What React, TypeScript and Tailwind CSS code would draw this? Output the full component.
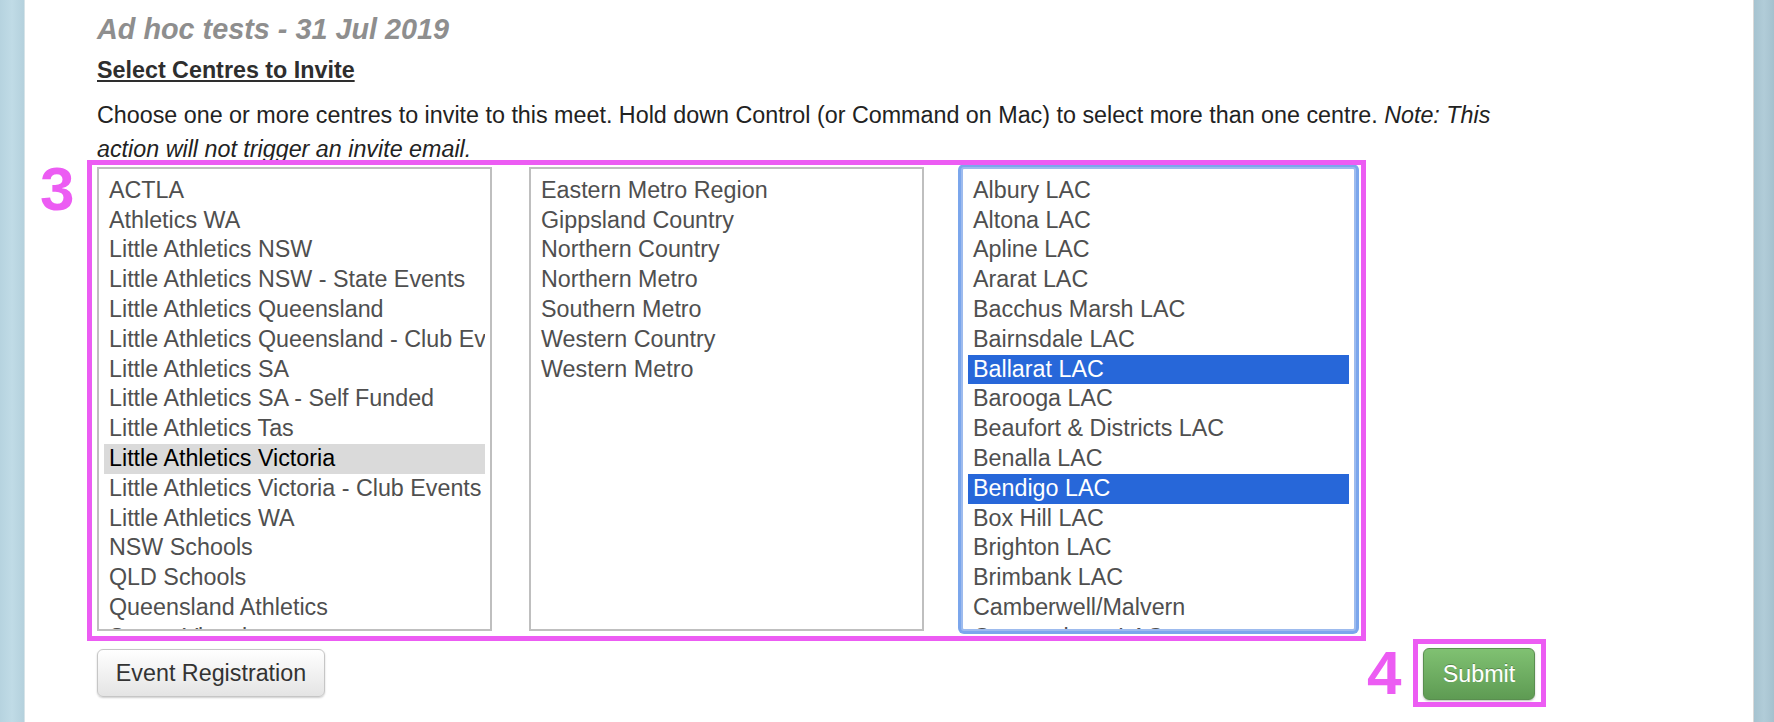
import React from "react";

const col1 = [
  "ACTLA",
  "Athletics WA",
  "Little Athletics NSW",
  "Little Athletics NSW - State Events",
  "Little Athletics Queensland",
  "Little Athletics Queensland - Club Events",
  "Little Athletics SA",
  "Little Athletics SA - Self Funded",
  "Little Athletics Tas",
  "Little Athletics Victoria",
  "Little Athletics Victoria - Club Events",
  "Little Athletics WA",
  "NSW Schools",
  "QLD Schools",
  "Queensland Athletics",
  "Sports Victoria",
];

const col2 = [
  "Eastern Metro Region",
  "Gippsland Country",
  "Northern Country",
  "Northern Metro",
  "Southern Metro",
  "Western Country",
  "Western Metro",
];

const col3 = [
  "Albury LAC",
  "Altona LAC",
  "Apline LAC",
  "Ararat LAC",
  "Bacchus Marsh LAC",
  "Bairnsdale LAC",
  "Ballarat LAC",
  "Barooga LAC",
  "Beaufort & Districts LAC",
  "Benalla LAC",
  "Bendigo LAC",
  "Box Hill LAC",
  "Brighton LAC",
  "Brimbank LAC",
  "Camberwell/Malvern",
  "Camperdown LAC",
];

type Opt = { label: string; state?: "gray" | "blue" };

function ListBox({ items, focused }: { items: Opt[]; focused?: boolean }) {
  return (
    <div
      className={
        focused
          ? "h-[464px] w-[395px] overflow-hidden rounded-[3px] border-2 border-[#9dbbee] bg-white px-[5px] pt-[6.8px] shadow-[0_0_0_3px_#7ba6ec]"
          : "h-[464px] w-[395px] overflow-hidden border-2 border-[#bfbfbf] bg-white px-[5px] pt-[6.8px]"
      }
    >
      {items.map((it) => (
        <div
          key={it.label}
          className={
            it.state === "gray"
              ? "h-[29.8px] overflow-hidden whitespace-nowrap bg-[#dadada] pl-[5px] text-[23.3px] leading-[29.8px] text-black"
              : it.state === "blue"
              ? "h-[29.8px] overflow-hidden whitespace-nowrap bg-[#2767d9] pl-[5px] text-[23.3px] leading-[29.8px] text-white"
              : "h-[29.8px] overflow-hidden whitespace-nowrap pl-[5px] text-[23.3px] leading-[29.8px] text-[#4f4f4f]"
          }
        >
          {it.label}
        </div>
      ))}
    </div>
  );
}

export default function App() {
  return (
    <div className="relative flex h-[722px] w-[1774px] overflow-hidden bg-white font-['Liberation_Sans',Arial,sans-serif]">
      <div className="w-[25px] shrink-0 border-r border-[#d6e3e8] bg-[linear-gradient(90deg,#b6d3df,#c0dbe6,#b4d1dd)]" />
      <div className="flex-1 pl-[72px]">
        <div className="flex w-[1438px] flex-col">
          <div className="pt-[11.6px] text-[28.8px] font-bold italic leading-[34px] text-[#8e8e8e]">
            Ad hoc tests - 31 Jul 2019
          </div>
          <div className="mt-[9px] text-[23.3px] font-bold leading-[30px] text-[#2e2e2e] underline underline-offset-[2px]">
            Select Centres to Invite
          </div>
          <p className="mt-[13px] text-[23.3px] leading-[34px] text-[#222]">
            Choose one or more centres to invite to this meet. Hold down Control (or Command on Mac) to
            select more than one centre. <em>Note: This action will not trigger an invite email.</em>
          </p>
          <div className="mt-[1.5px] flex gap-[37px]">
            <ListBox
              items={col1.map((l) => ({ label: l, state: l === "Little Athletics Victoria" ? "gray" : undefined }))}
            />
            <ListBox items={col2.map((l) => ({ label: l }))} />
            <ListBox
              focused
              items={col3.map((l) => ({
                label: l,
                state: l === "Ballarat LAC" || l === "Bendigo LAC" ? "blue" : undefined,
              }))}
            />
          </div>
          <div className="mt-[18px] flex items-start justify-between">
            <button className="h-[48px] w-[228px] rounded-[6px] border border-[#c6c6c6] bg-[linear-gradient(#ffffff,#e4e4e4)] text-[23.3px] text-[#333] shadow-[0_1px_2px_rgba(0,0,0,0.2)]">
              Event Registration
            </button>
            <button className="-mt-[1px] h-[52px] w-[112px] rounded-[6px] border border-[#5a8e50] bg-[linear-gradient(#80c172,#5e9b53)] text-[23.3px] text-white shadow-[0_1px_2px_rgba(0,0,0,0.25)] [text-shadow:0_-1px_0_rgba(0,0,0,0.25)]">
              Submit
            </button>
          </div>
        </div>
      </div>
      <div className="w-[21px] shrink-0 border-l border-[#d9d9d9] bg-[linear-gradient(90deg,#a6c3d0,#b1ccd8,#a5c1ce)]" />

      {/* annotations */}
      <div className="pointer-events-none absolute left-[87px] top-[160px] h-[481px] w-[1279px] border-[5px] border-[#ec5cf3]" />
      <div className="pointer-events-none absolute left-[40px] top-[158px] text-[62px] font-bold leading-[62px] text-[#ec5cf3]">
        3
      </div>
      <div className="pointer-events-none absolute left-[1367px] top-[642px] text-[62px] font-bold leading-[62px] text-[#ec5cf3]">
        4
      </div>
      <div className="pointer-events-none absolute left-[1413px] top-[639px] h-[68px] w-[133px] border-[5px] border-[#ec5cf3]" />
    </div>
  );
}
